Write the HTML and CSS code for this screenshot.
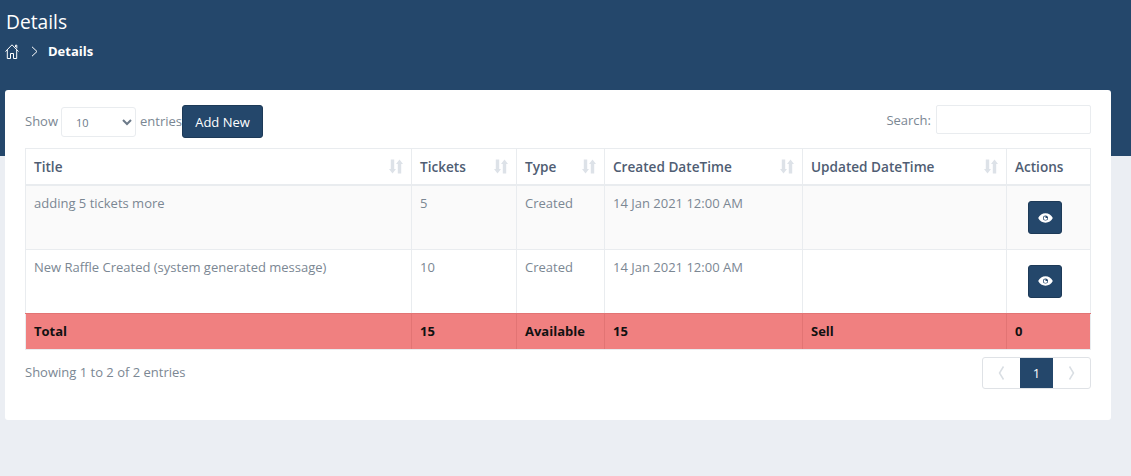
FILE: index.html
```html
<!DOCTYPE html>
<html lang="en">
<head>
    <meta charset="UTF-8">
    <title>Details</title>
    <link rel="stylesheet" href="styles.css">
</head>
<body>

    <svg class="icon-defs" width="0" height="0">
        <symbol id="sort" viewBox="0 0 14 15">
            <path d="M1.800.5h3.400V10H7l-3.500 4.500L0 10h1.800z"/>
            <path d="M8.800 14.500h3.400V5H14L10.500.5 7 5h1.800z"/>
        </symbol>
        <symbol id="eye" viewBox="0 0 16 10">
            <path fill-rule="evenodd" d="M8 0C4.600 0 1.800 2 .2 5c1.600 3 4.400 5 7.800 5s6.200-2 7.800-5C14.200 2 11.400 0 8 0zM8 2.300a2.700 2.700 0 1 1 0 5.400 2.700 2.700 0 0 1 0-5.400z"/>
            <path d="M8 3a2 2 0 1 0 2 2H8z"/>
        </symbol>
    </svg>

    <header class="page-header">
        <h1>Details</h1>
        <nav class="breadcrumb">
            <svg class="home-icon" viewBox="0 0 14 15" width="14" height="15">
                <path d="M.5 7.500 7 .8l6.500 6.700M2.300 5.800v8.700h3.200V9.500h3v5h3.200V5.800M10.500 3V1.200h1.300v3.200" fill="none" stroke="#fff" stroke-width="1"/>
            </svg>
            <svg class="crumb-sep" viewBox="0 0 7 11" width="7" height="11">
                <path d="M1 .8l5 4.700-5 4.700" fill="none" stroke="#fff" stroke-width="1"/>
            </svg>
            <strong>Details</strong>
        </nav>
    </header>

    <main class="card">
        <div class="table-top">
            <div class="length-control">
                <label>Show</label>
                <select class="length-select">
                    <option>10</option>
                </select>
                <label>entries</label>
                <button class="btn-add">Add New</button>
            </div>
            <div class="search-control">
                <label>Search:</label>
                <input type="text" class="search-input">
            </div>
        </div>

        <table class="data-table">
            <colgroup>
                <col class="col-title">
                <col class="col-tickets">
                <col class="col-type">
                <col class="col-created">
                <col class="col-updated">
                <col class="col-actions">
            </colgroup>
            <thead>
                <tr>
                    <th><span class="th-inner">Title <svg class="sort-icon"><use href="#sort"/></svg></span></th>
                    <th><span class="th-inner">Tickets <svg class="sort-icon"><use href="#sort"/></svg></span></th>
                    <th><span class="th-inner">Type <svg class="sort-icon"><use href="#sort"/></svg></span></th>
                    <th><span class="th-inner">Created DateTime <svg class="sort-icon"><use href="#sort"/></svg></span></th>
                    <th><span class="th-inner">Updated DateTime <svg class="sort-icon"><use href="#sort"/></svg></span></th>
                    <th>Actions</th>
                </tr>
            </thead>
            <tbody>
                <tr class="row-odd">
                    <td>adding 5 tickets more</td>
                    <td>5</td>
                    <td>Created</td>
                    <td>14 Jan 2021 12:00 AM</td>
                    <td></td>
                    <td class="cell-action"><button class="btn-view"><svg class="eye-icon"><use href="#eye"/></svg></button></td>
                </tr>
                <tr>
                    <td>New Raffle Created (system generated message)</td>
                    <td>10</td>
                    <td>Created</td>
                    <td>14 Jan 2021 12:00 AM</td>
                    <td></td>
                    <td class="cell-action"><button class="btn-view"><svg class="eye-icon"><use href="#eye"/></svg></button></td>
                </tr>
            </tbody>
            <tfoot>
                <tr>
                    <td>Total</td>
                    <td>15</td>
                    <td>Available</td>
                    <td>15</td>
                    <td>Sell</td>
                    <td>0</td>
                </tr>
            </tfoot>
        </table>

        <div class="table-bottom">
            <div class="table-info">Showing 1 to 2 of 2 entries</div>
            <div class="pagination">
                <a class="page-link"><svg viewBox="0 0 7 14" width="7" height="14"><path d="M5.500.5 1.500 7l4 6.500" fill="none" stroke="#d9dee3" stroke-width="1.500"/></svg></a>
                <a class="page-link page-current">1</a>
                <a class="page-link"><svg viewBox="0 0 7 14" width="7" height="14"><path d="M1.500.5l4 6.500-4 6.500" fill="none" stroke="#d9dee3" stroke-width="1.500"/></svg></a>
            </div>
        </div>
    </main>

</body>
</html>
```

FILE: styles.css
```css
/* General Page Styling */
body {
    font-family: 'Open Sans', 'Noto Sans', sans-serif;
    font-size: 13px;
    margin: 0;
    padding: 0;
    background: #ebeef3;
    color: #7b8793;
}

.icon-defs {
    position: absolute;
}

/* Header Section */
.page-header {
    background-color: #24476b;
    color: #FFFFFF;
    height: 156px;
    padding: 9px 6px 0;
    box-sizing: border-box;
}

.page-header h1 {
    font-size: 19.2px;
    font-weight: 400;
    line-height: 25px;
    margin: 0;
}

.breadcrumb {
    display: flex;
    align-items: center;
    margin-top: 8px;
    height: 18px;
}

.home-icon {
    margin: 0 12px 0 -1px;
}

.crumb-sep {
    margin-right: 10px;
}

.breadcrumb strong {
    font-size: 13px;
    font-weight: 700;
}

/* Card */
.card {
    background: #FFFFFF;
    width: 1106px;
    height: 330px;
    margin: -66px 0 0 5px;
    padding: 15px 20px 0;
    box-sizing: border-box;
    border-radius: 3px;
    position: relative;
}

.table-top {
    display: flex;
    justify-content: space-between;
    align-items: flex-start;
    height: 43px;
}

.length-control {
    display: flex;
    align-items: center;
    height: 33px;
}

.length-control label {
    margin-bottom: 2px;
}

.length-select {
    width: 75px;
    height: 30px;
    margin: 1px 4px 0 3px;
    padding: 0 0 0 10px;
    border: 1px solid #e9ecef;
    border-radius: 3px;
    background: #FFFFFF;
    color: #6c7a89;
    font-family: inherit;
    font-size: 11px;
}

.btn-add {
    width: 81px;
    height: 33px;
    background-color: #24476b;
    color: #FFFFFF;
    border: 1px solid #1d3a58;
    border-radius: 3px;
    font-family: inherit;
    font-size: 13px;
    padding: 0;
}

.search-control {
    display: flex;
    align-items: center;
    height: 29px;
}

.search-input {
    width: 155px;
    height: 29px;
    margin-left: 5px;
    box-sizing: border-box;
    border: 1px solid #e9ecef;
    border-radius: 2px;
}

/* Table */
.data-table {
    width: 1065px;
    border-collapse: collapse;
    table-layout: fixed;
}

.col-title { width: 386px; }
.col-tickets { width: 105px; }
.col-type { width: 88px; }
.col-created { width: 198px; }
.col-updated { width: 204px; }
.col-actions { width: 84px; }

.data-table th,
.data-table td {
    border: 1px solid #e9ecef;
    padding: 0 8px;
    text-align: left;
}

.data-table th {
    height: 35px;
    font-size: 13.6px;
    font-weight: 600;
    color: #4f5d73;
    border-bottom-width: 2px;
}

.th-inner {
    display: flex;
    justify-content: space-between;
    align-items: center;
}

.sort-icon {
    width: 14px;
    height: 15px;
    fill: #dde2e8;
}

.data-table tbody td {
    height: 64px;
    padding-top: 8px;
    box-sizing: border-box;
    vertical-align: top;
}

.data-table tbody tr:last-child td {
    border-bottom-color: #e27474;
}

.row-odd {
    background: #fafafa;
}

.data-table tbody .cell-action {
    padding: 15px 0 0 21px;
}

.btn-view {
    display: block;
    width: 34px;
    height: 33px;
    padding: 0;
    background-color: #24476b;
    border: 1px solid #1d3a58;
    border-radius: 3px;
}

.eye-icon {
    display: block;
    width: 15px;
    height: 10px;
    margin: 0 auto;
    fill: #FFFFFF;
}

/* Totals row */
.data-table tfoot td {
    height: 35px;
    background: #f08080;
    color: #111111;
    font-weight: 700;
    border-color: #e9ecef;
    border-left-color: #e27474;
    border-right-color: #e27474;
}

.data-table tfoot td:first-child {
    border-left-color: #e9ecef;
}

.data-table tfoot td:last-child {
    border-right-color: #e9ecef;
}

/* Bottom bar */
.table-bottom {
    display: flex;
    justify-content: space-between;
    align-items: flex-start;
    margin-top: 7px;
}

.table-info {
    padding-top: 6px;
}

.pagination {
    display: flex;
    height: 32px;
    box-sizing: border-box;
    border: 1px solid #dfe2e6;
    border-radius: 3px;
}

.page-link {
    width: 37px;
    display: flex;
    align-items: center;
    justify-content: center;
}

.page-current {
    width: 33px;
    background-color: #24476b;
    color: #FFFFFF;
}
```
